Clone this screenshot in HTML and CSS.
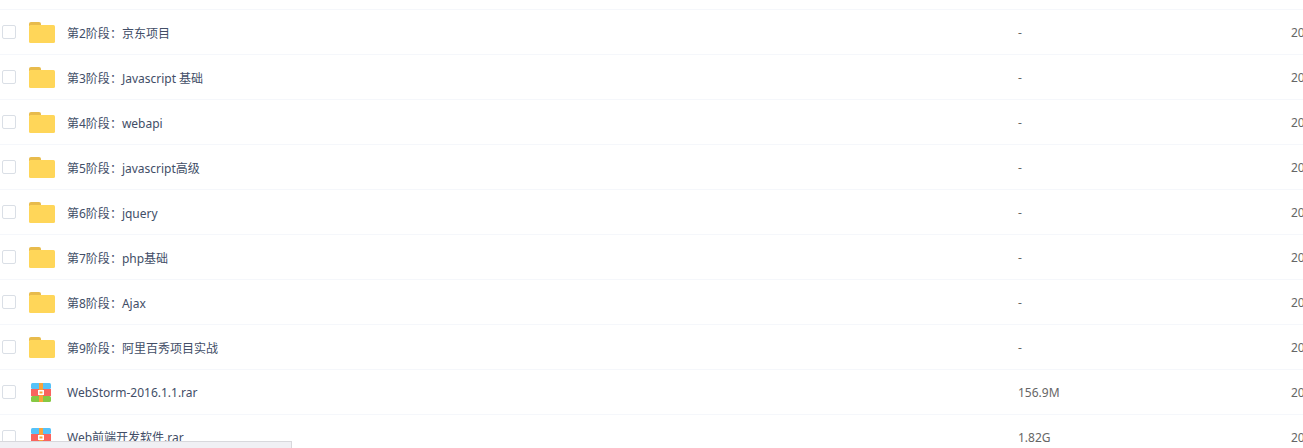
FILE: index.html
```html
<!DOCTYPE html>
<html lang="zh-CN">
<head>
    <meta charset="UTF-8">
    <meta name="viewport" content="width=device-width, initial-scale=1.0">
    <title>文件列表</title>
    <link rel="stylesheet" href="styles.css">
</head>
<body>
    <svg class="defs" width="0" height="0">
        <symbol id="folder" viewBox="0 0 26 21">
            <path d="M0 2a2 2 0 0 1 2-2h8a2 2 0 0 1 2 2v2H0z" fill="#e8bb4c"/>
            <rect y="3" width="26" height="18" rx="1.5" fill="#ffd659"/>
        </symbol>
        <symbol id="rar" viewBox="0 0 20 19">
            <rect width="20" height="6" rx="1.5" fill="#55c2f8"/>
            <rect y="13" width="20" height="6" rx="1.5" fill="#86c843"/>
            <rect y="6" width="20" height="7" fill="#f9635e"/>
            <rect x="8" width="4" height="19" fill="#f9a33a"/>
            <rect x="7" y="7" width="6" height="5" fill="#fff"/>
            <rect x="8.5" y="8.5" width="3" height="2" fill="#f9a33a"/>
        </symbol>
    </svg>

    <div class="list">
        <div class="row row-folder">
            <span class="check"></span>
            <svg class="icon"><use href="#folder"/></svg>
            <span class="name">第2阶段<span class="colon">：</span>京东项目</span>
            <span class="size">-</span>
            <span class="date">20</span>
        </div>
        <div class="row row-folder">
            <span class="check"></span>
            <svg class="icon"><use href="#folder"/></svg>
            <span class="name">第3阶段<span class="colon">：</span>Javascript 基础</span>
            <span class="size">-</span>
            <span class="date">20</span>
        </div>
        <div class="row row-folder">
            <span class="check"></span>
            <svg class="icon"><use href="#folder"/></svg>
            <span class="name">第4阶段<span class="colon">：</span>webapi</span>
            <span class="size">-</span>
            <span class="date">20</span>
        </div>
        <div class="row row-folder">
            <span class="check"></span>
            <svg class="icon"><use href="#folder"/></svg>
            <span class="name">第5阶段<span class="colon">：</span>javascript高级</span>
            <span class="size">-</span>
            <span class="date">20</span>
        </div>
        <div class="row row-folder">
            <span class="check"></span>
            <svg class="icon"><use href="#folder"/></svg>
            <span class="name">第6阶段<span class="colon">：</span>jquery</span>
            <span class="size">-</span>
            <span class="date">20</span>
        </div>
        <div class="row row-folder">
            <span class="check"></span>
            <svg class="icon"><use href="#folder"/></svg>
            <span class="name">第7阶段<span class="colon">：</span>php基础</span>
            <span class="size">-</span>
            <span class="date">20</span>
        </div>
        <div class="row row-folder">
            <span class="check"></span>
            <svg class="icon"><use href="#folder"/></svg>
            <span class="name">第8阶段<span class="colon">：</span>Ajax</span>
            <span class="size">-</span>
            <span class="date">20</span>
        </div>
        <div class="row row-folder">
            <span class="check"></span>
            <svg class="icon"><use href="#folder"/></svg>
            <span class="name">第9阶段<span class="colon">：</span>阿里百秀项目实战</span>
            <span class="size">-</span>
            <span class="date">20</span>
        </div>
        <div class="row">
            <span class="check"></span>
            <svg class="icon icon-rar"><use href="#rar"/></svg>
            <span class="name">WebStorm-2016.1.1.rar</span>
            <span class="size">156.9M</span>
            <span class="date">20</span>
        </div>
        <div class="row">
            <span class="check"></span>
            <svg class="icon icon-rar"><use href="#rar"/></svg>
            <span class="name">Web前端开发软件.rar</span>
            <span class="size">1.82G</span>
            <span class="date">20</span>
        </div>
    </div>

    <div class="scrollbar"></div>
</body>
</html>
```

FILE: styles.css
```css
* {
    margin: 0;
    padding: 0;
    box-sizing: border-box;
}

html, body {
    height: 100%;
    overflow: hidden;
}

body {
    background: #fff;
    color: #424e67;
    font-family: "Noto Sans", "Noto Sans CJK SC", sans-serif;
    font-size: 12px;
    padding-top: 9px;
}

.defs {
    position: absolute;
}

.row {
    display: grid;
    grid-template-columns: 27px 38px 951px 273px 12px;
    align-items: center;
    height: 45px;
    padding-left: 2px;
    border-top: 1px solid #f5f7fb;
}

.row-folder .name {
    padding-top: 2px;
}

.check {
    width: 14px;
    height: 14px;
    border: 1px solid #dadfe6;
    border-radius: 2px;
    background: #fff;
}

.icon {
    display: block;
    width: 26px;
    height: 21px;
}

.icon-rar {
    width: 20px;
    height: 19px;
    margin-left: 2px;
}

.name {
    white-space: nowrap;
}

/* centred full-width colon, the TC cut has it in the middle of the cell */
.colon {
    font-family: "Noto Sans CJK TC", sans-serif;
}

.size, .date {
    color: #666;
    white-space: nowrap;
}

.scrollbar {
    position: absolute;
    left: 0;
    bottom: 0;
    width: 292px;
    height: 7px;
    background: #f0f0f4;
    border-top: 1px solid #d8d8dc;
    border-right: 1px solid #d8d8dc;
}
```
